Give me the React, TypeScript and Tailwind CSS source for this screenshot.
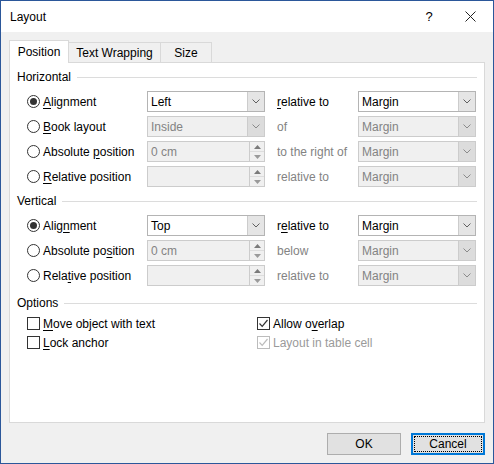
import React from 'react';

const font = { fontFamily: '"Segoe UI", "Liberation Sans", Arial, sans-serif' };

// mnemonic underline
function U({ children }: { children: React.ReactNode }) {
  return <span className="underline decoration-1 underline-offset-[2px]">{children}</span>;
}

function Chevron({ color = '#606060' }: { color?: string }) {
  return (
    <svg width="8" height="5" viewBox="0 0 8 5">
      <path d="M0.5 0.5 L4 4 L7.5 0.5" fill="none" stroke={color} strokeWidth="1" />
    </svg>
  );
}

function Combo({ value, disabled }: { value: string; disabled?: boolean }) {
  return (
    <div
      className={
        'flex h-[21px] w-[118px] border ' +
        (disabled ? 'border-[#cccccc] bg-[#f0f0f0] text-[#838383]' : 'border-[#b4b4b4] bg-white text-black')
      }
    >
      <div className="flex flex-1 items-center pl-[3px]">{value}</div>
      <div
        className={
          'flex w-[17px] items-center justify-center border-l ' +
          (disabled ? 'border-[#cccccc] bg-[#dcdcdc]' : 'border-[#cccccc] bg-[#e5e5e5]')
        }
      >
        <Chevron color={disabled ? '#8a8a8a' : '#606060'} />
      </div>
    </div>
  );
}

function Spin({ value }: { value: string }) {
  return (
    <div className="flex h-[21px] w-[118px] border border-[#cccccc] bg-[#f0f0f0] text-[#838383]">
      <div className="flex flex-1 items-center pl-[3px]">{value}</div>
      <div className="flex w-[15px] flex-col border-l border-[#cccccc]">
        <div className="flex flex-1 items-center justify-center border-b border-[#dddddd]">
          <svg width="7" height="4" viewBox="0 0 7 4">
            <path d="M0 4 L3.5 0 L7 4 Z" fill="#7a7a7a" />
          </svg>
        </div>
        <div className="flex flex-1 items-center justify-center">
          <svg width="7" height="4" viewBox="0 0 7 4">
            <path d="M0 0 L3.5 4 L7 0 Z" fill="#9a9a9a" />
          </svg>
        </div>
      </div>
    </div>
  );
}

function Radio({ checked }: { checked?: boolean }) {
  return (
    <div className="flex h-[13px] w-[13px] shrink-0 items-center justify-center rounded-full border border-[#333333] bg-white">
      {checked && <div className="h-[7px] w-[7px] rounded-full bg-[#333333]" />}
    </div>
  );
}

function Check({ checked, disabled }: { checked?: boolean; disabled?: boolean }) {
  const c = disabled ? '#bcbcbc' : '#333333';
  return (
    <div
      className={
        'flex h-[13px] w-[13px] shrink-0 items-center justify-center border bg-white ' +
        (disabled ? 'border-[#bcbcbc]' : 'border-[#333333]')
      }
    >
      {checked && (
        <svg width="11" height="11" viewBox="0 0 11 11">
          <path d="M1.5 5.5 L4.2 8.3 L9.5 2" fill="none" stroke={c} strokeWidth="1.2" />
        </svg>
      )}
    </div>
  );
}

function SectionHeader({ label }: { label: string }) {
  return (
    <div className="flex h-[16px] items-center gap-[6px] pr-[7px]">
      <span>{label}</span>
      <div className="h-px flex-1 bg-[#dcdcdc]" />
    </div>
  );
}

interface RowProps {
  checked?: boolean;
  label: React.ReactNode;
  field: React.ReactNode;
  rel: React.ReactNode;
  relDisabled?: boolean;
  target: React.ReactNode;
}

function Row({ checked, label, field, rel, relDisabled, target }: RowProps) {
  return (
    <div className="flex h-[25px] items-center pl-[17px]">
      <div className="flex w-[120px] items-center gap-[3px]">
        <Radio checked={checked} />
        <span className="whitespace-nowrap">{label}</span>
      </div>
      {field}
      <div className={'ml-[12px] w-[81px] whitespace-nowrap ' + (relDisabled ? 'text-[#838383]' : '')}>{rel}</div>
      {target}
    </div>
  );
}

export default function App() {
  return (
    <div
      className="flex h-[464px] w-[494px] flex-col border border-[#2b579a] bg-[#f0f0f0] text-[12px] text-black"
      style={font}
    >
      {/* Title bar */}
      <div className="flex h-[31px] shrink-0 items-center bg-white pl-[9px]">
        <span className="flex-1">Layout</span>
        <span className="w-[20px] text-center text-[13px]">?</span>
        <div className="ml-[21px] mr-[13px] flex w-[20px] justify-center">
          <svg width="11" height="11" viewBox="0 0 11 11">
            <path d="M0.5 0.5 L10.5 10.5 M10.5 0.5 L0.5 10.5" stroke="#222" strokeWidth="1" />
          </svg>
        </div>
      </div>

      {/* Tabs */}
      <div className="mt-[8px] flex h-[22px] items-end pl-[8px]">
        <div className="relative z-10 -mb-px flex h-[23px] w-[60px] items-center justify-center border border-b-0 border-[#d9d9d9] bg-white">
          Position
        </div>
        <div className="flex h-[20px] w-[92px] items-center justify-center border border-b-0 border-l-0 border-[#d9d9d9] bg-[#f0f0f0]">
          Text Wrapping
        </div>
        <div className="flex h-[20px] w-[51px] items-center justify-center border border-b-0 border-l-0 border-[#d9d9d9] bg-[#f0f0f0]">
          Size
        </div>
      </div>

      {/* Panel */}
      <div className="mx-[8px] flex h-[361px] flex-col border border-[#d9d9d9] bg-white pl-[7px] pt-[6px]">
        <SectionHeader label="Horizontal" />
        <div className="ml-[-7px] mt-[4px] flex flex-col">
          <Row
            checked
            label={<><U>A</U>lignment</>}
            field={<Combo value="Left" />}
            rel={<><U>r</U>elative to</>}
            target={<Combo value="Margin" />}
          />
          <Row
            label={<><U>B</U>ook layout</>}
            field={<Combo value="Inside" disabled />}
            rel="of"
            relDisabled
            target={<Combo value="Margin" disabled />}
          />
          <Row
            label={<>Absolute <U>p</U>osition</>}
            field={<Spin value="0 cm" />}
            rel="to the right of"
            relDisabled
            target={<Combo value="Margin" disabled />}
          />
          <Row
            label={<><U>R</U>elative position</>}
            field={<Spin value="" />}
            rel="relative to"
            relDisabled
            target={<Combo value="Margin" disabled />}
          />
        </div>

        <div className="mt-[4px]">
          <SectionHeader label="Vertical" />
        </div>
        <div className="ml-[-7px] mt-[4px] flex flex-col">
          <Row
            checked
            label={<>Alig<U>n</U>ment</>}
            field={<Combo value="Top" />}
            rel={<>r<U>e</U>lative to</>}
            target={<Combo value="Margin" />}
          />
          <Row
            label={<>Absolute po<U>s</U>ition</>}
            field={<Spin value="0 cm" />}
            rel="below"
            relDisabled
            target={<Combo value="Margin" disabled />}
          />
          <Row
            label={<>Rela<U>t</U>ive position</>}
            field={<Spin value="" />}
            rel="relative to"
            relDisabled
            target={<Combo value="Margin" disabled />}
          />
        </div>

        <div className="mt-[7px]">
          <SectionHeader label="Options" />
        </div>
        <div className="ml-[-7px] mt-[3px] grid grid-cols-[230px_1fr] pl-[17px]">
          <div className="flex h-[19px] items-center gap-[3px]">
            <Check />
            <span><U>M</U>ove object with text</span>
          </div>
          <div className="flex h-[19px] items-center gap-[3px]">
            <Check checked />
            <span>Allow o<U>v</U>erlap</span>
          </div>
          <div className="flex h-[19px] items-center gap-[3px]">
            <Check />
            <span><U>L</U>ock anchor</span>
          </div>
          <div className="flex h-[19px] items-center gap-[3px] text-[#9a9a9a]">
            <Check checked disabled />
            <span>Layout in table cell</span>
          </div>
        </div>
      </div>

      {/* Buttons */}
      <div className="mt-[10px] flex justify-end gap-[10px] pr-[8px]">
        <button className="flex h-[22px] w-[74px] items-center justify-center border border-[#adadad] bg-[#e1e1e1]">
          OK
        </button>
        <button className="flex h-[22px] w-[74px] items-center justify-center border-2 border-[#0078d7] bg-[#e1e1e1] p-px">
          <span className="flex h-full w-full items-center justify-center border border-dotted border-black">Cancel</span>
        </button>
      </div>
    </div>
  );
}
